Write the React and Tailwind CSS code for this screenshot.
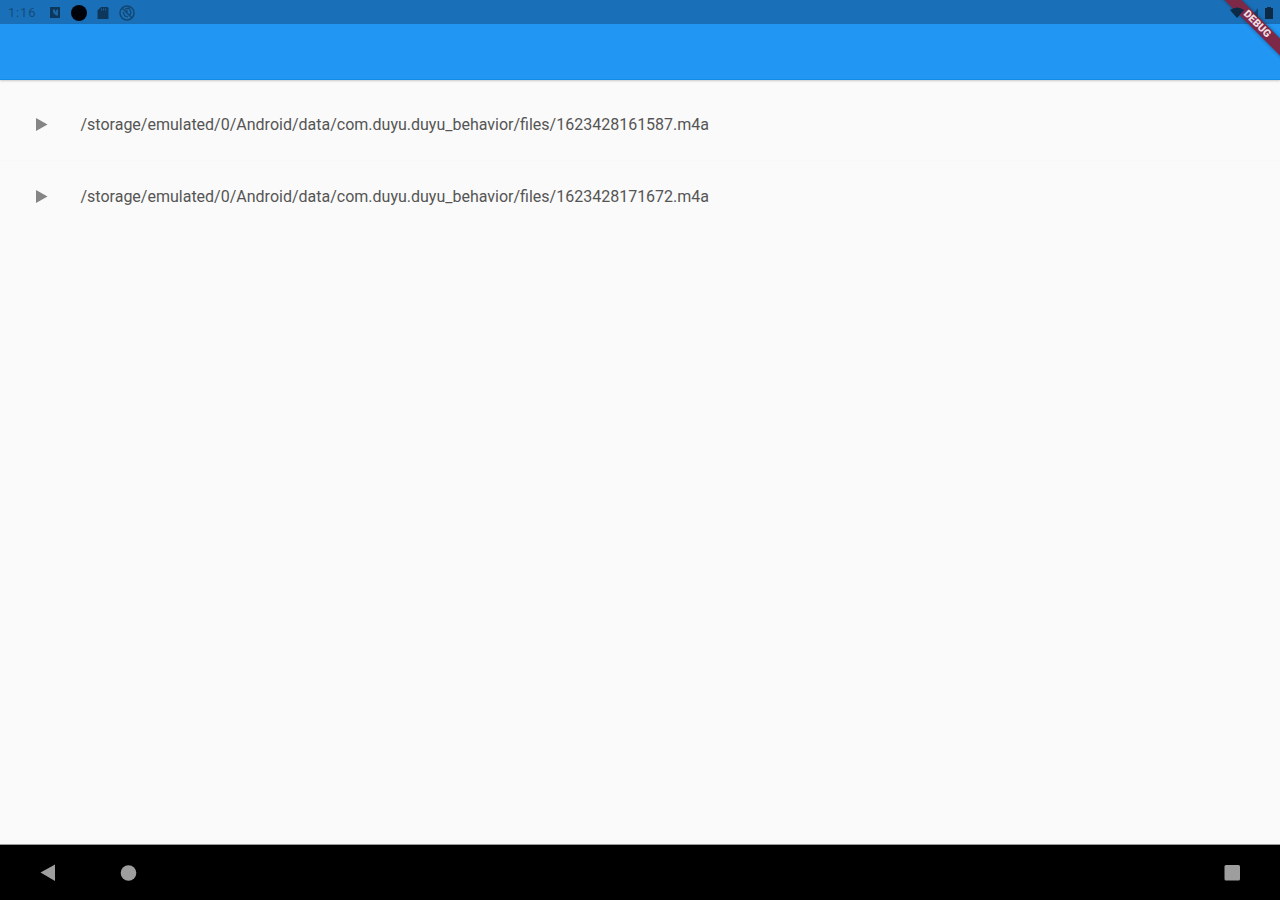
import React from 'react';

const recordings = [
  '/storage/emulated/0/Android/data/com.duyu.duyu_behavior/files/1623428161587.m4a',
  '/storage/emulated/0/Android/data/com.duyu.duyu_behavior/files/1623428171672.m4a',
];

const StatusBar = () => (
  <div className="flex h-6 items-center justify-between bg-[#1a70b8] pl-2 pr-[3px] text-[#0d385c]">
    <div className="flex items-center">
      <span className="w-[39px] pt-0.5 text-[13px] leading-6 tracking-[0.8px] text-[#124c7c]">1:16</span>
      <svg className="mt-0.5 h-4 w-4" viewBox="0 0 16 16">
        <path fill="currentColor" d="M3 2h10v11H3z" />
        <path fill="#1a66a6" d="M6 4.500h2v2.500l2-2.500h1v6H9l-3-3z" />
      </svg>
      <svg className="ml-2 mt-0.5 h-4 w-4" viewBox="0 0 16 16">
        <circle cx="8" cy="8" r="8" fill="#00040a" />
      </svg>
      <svg className="ml-2 mt-0.5 h-4 w-4" viewBox="0 0 16 16">
        <path fill="currentColor" d="M6 2h6.500l1 1v11h-11V5.500z" />
        <path d="M6.500 3.500v2M8.500 3.500v2M10.500 3.500v2" stroke="#1a5f98" />
      </svg>
      <svg className="ml-2 mt-0.5 h-4 w-4" viewBox="0 0 16 16" fill="none" stroke="#124772">
        <circle cx="8" cy="8" r="7" strokeWidth="1.5" />
        <path d="M3 3l10 10M6 4l4-1 2 4-1 3M4 7l2 4 3 1M8 5v3" strokeWidth="1.3" />
      </svg>
    </div>
    <div className="relative z-10 flex items-center pt-0.5 text-[#0c2a45]">
      <svg className="h-4 w-4" viewBox="0 0 16 16">
        <path fill="currentColor" d="M1 5q7-5 14 0L8 13z" />
      </svg>
      <svg className="h-4 w-4" viewBox="0 0 16 16">
        <path fill="currentColor" fillOpacity="0.6" d="M13 3v10l-4-5z" />
      </svg>
      <svg className="h-4 w-4" viewBox="0 0 16 16">
        <path fill="currentColor" d="M6 2h4v1h2v11H4V3h2z" />
      </svg>
    </div>
  </div>
);

const RecordingItem = ({ path }) => (
  <li className="flex h-[72px] items-center border-b border-[#f7f7f7] pl-[29px] last:border-transparent">
    <svg className="h-6 w-6 text-[#858585]" viewBox="0 0 24 24">
      <path fill="currentColor" d="M7 5v13l11.500-6.500z" />
    </svg>
    <span className="ml-[27.500px] whitespace-nowrap text-base text-[#555]">{path}</span>
  </li>
);

const NavigationBar = () => (
  <div className="flex h-[55px] shrink-0 items-center justify-between bg-black px-9 text-[#9e9e9e]">
    <div className="flex gap-14">
      <svg className="h-6 w-6" viewBox="0 0 24 24">
        <path fill="currentColor" d="M19 3.500v16.500L4.500 11.500z" />
      </svg>
      <svg className="h-6 w-6" viewBox="0 0 24 24">
        <circle cx="12.500" cy="12" r="7.800" fill="currentColor" />
      </svg>
    </div>
    <svg className="h-6 w-6" viewBox="0 0 24 24">
      <rect x="4.500" y="4" width="15.500" height="15.500" rx="1.500" fill="currentColor" />
    </svg>
  </div>
);

const App = () => (
  <div className="relative flex h-screen flex-col overflow-hidden bg-[#fafafa] font-['Roboto',sans-serif]">
    <StatusBar />
    <header className="h-14 shrink-0 border-b border-[#108be8] bg-[#2196f3] shadow-[0_1px_2px_rgba(0,0,0,0.2)]" />
    <ul className="flex-1 pt-[9px]">
      {recordings.map((path) => (
        <RecordingItem key={path} path={path} />
      ))}
    </ul>
    <div className="h-px bg-[#999]" />
    <NavigationBar />

    {/* Debug ribbon */}
    <div className="absolute top-[18px] -right-[27px] flex h-3 w-[100px] rotate-45 items-center justify-center bg-[#7d2847] text-[10.5px] leading-3 font-black text-[#eedde3] shadow-[0_0_4px_rgba(0,0,0,0.4)]">
      DEBUG
    </div>
  </div>
);

export default App;
